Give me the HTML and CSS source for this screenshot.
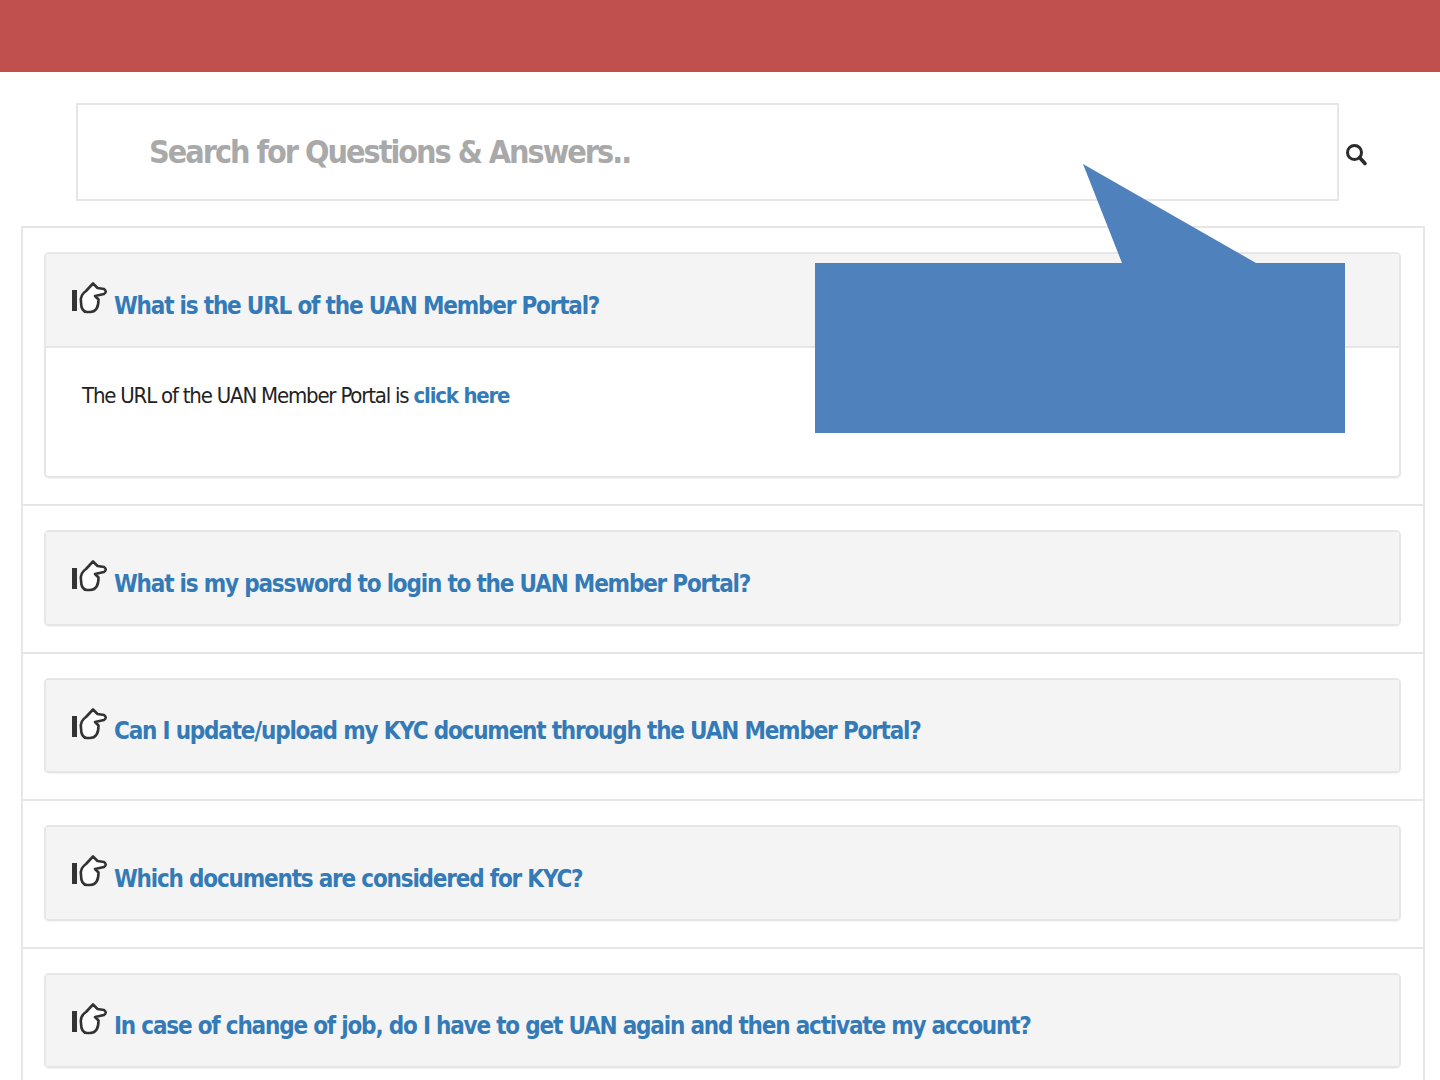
FILE: index.html
```html
<!DOCTYPE html>
<html lang="en">
<head>
    <meta charset="UTF-8">
    <title>UAN Member Portal FAQ</title>
    <link rel="stylesheet" href="styles.css">
</head>
<body>
    <svg width="0" height="0" class="sprite">
        <symbol id="hand" viewBox="0 0 38 34">
            <rect x="2" y="9" width="5" height="21" fill="#333"/>
            <path d="M11 21 C10 15 13 12 16 10 L23 2.5 L27.5 7 L34 8 Q37.5 10.5 34 13 L25 15 L28.5 18.5 C28.5 26 26 31 20 31 L17 31 C13 31 11 27 11 21 Z" fill="#fff" stroke="#333" stroke-width="2.6" stroke-linejoin="round"/>
        </symbol>
    </svg>

    <header class="topbar"></header>

    <div class="search-row">
        <div class="search-box">Search for Questions &amp; Answers..</div>
        <svg class="search-icon" viewBox="0 0 24 24" width="24" height="26">
            <circle cx="10.5" cy="10.5" r="7" fill="none" stroke="#2b2b2b" stroke-width="3"/>
            <path d="M15.5 15.5 L21 21.5" stroke="#2b2b2b" stroke-width="3.6" stroke-linecap="round"/>
        </svg>
    </div>

    <ul class="faq-list">
        <li class="faq-item">
            <div class="panel">
                <div class="panel-head">
                    <svg class="hand"><use href="#hand"/></svg>
                    <a class="question" href="#">What is the URL of the UAN Member Portal?</a>
                </div>
                <div class="panel-body">The URL of the UAN Member Portal is <a href="#">click here</a></div>
            </div>
        </li>
        <li class="faq-item">
            <div class="panel">
                <div class="panel-head">
                    <svg class="hand"><use href="#hand"/></svg>
                    <a class="question" href="#">What is my password to login to the UAN Member Portal?</a>
                </div>
            </div>
        </li>
        <li class="faq-item">
            <div class="panel">
                <div class="panel-head">
                    <svg class="hand"><use href="#hand"/></svg>
                    <a class="question" href="#">Can I update/upload my KYC document through the UAN Member Portal?</a>
                </div>
            </div>
        </li>
        <li class="faq-item">
            <div class="panel">
                <div class="panel-head">
                    <svg class="hand"><use href="#hand"/></svg>
                    <a class="question" href="#">Which documents are considered for KYC?</a>
                </div>
            </div>
        </li>
        <li class="faq-item">
            <div class="panel">
                <div class="panel-head">
                    <svg class="hand"><use href="#hand"/></svg>
                    <a class="question" href="#">In case of change of job, do I have to get UAN again and then activate my account?</a>
                </div>
            </div>
        </li>
    </ul>

    <!-- callout drawn over the page -->
    <svg class="callout" width="530" height="269" viewBox="0 0 530 269">
        <path d="M0 99 H307 L268 0 L441 99 H530 V269 H0 Z" fill="#4f81bd"/>
    </svg>
</body>
</html>
```

FILE: styles.css
```css
* {
    margin: 0;
    padding: 0;
    box-sizing: border-box;
}

html, body {
    height: 1080px;
    overflow: hidden;
}

body {
    background: white;
    font-family: "DejaVu Sans Condensed", "DejaVu Sans", sans-serif;
    position: relative;
}

.sprite {
    position: absolute;
}

.topbar {
    height: 72px;
    background: #c0504d;
}

.search-row {
    display: flex;
    align-items: center;
    padding: 31px 0 0 76px;
    gap: 5px;
}

.search-box {
    width: 1263px;
    height: 98px;
    border: 2px solid #e6e6e6;
    padding-left: 71px;
    padding-bottom: 1px;
    display: flex;
    align-items: center;
    color: #a9a9a9;
    font-size: 32px;
    font-weight: 700;
    letter-spacing: -2px;
}

.search-icon {
    margin-top: 4px;
}

.faq-list {
    list-style: none;
    margin: 25px 15px 0 21px;
    border: 2px solid #e6e6e6;
    border-bottom: none;
}

.faq-item {
    padding: 24px 22px 26px 21px;
    border-bottom: 2px solid #e6e6e6;
}

.panel {
    border: 2px solid #e6e6e6;
    border-radius: 5px;
    box-shadow: 0 1px 1px rgba(0,0,0,0.05);
    background: white;
}

.panel-head {
    height: 91.5px;
    background: #f4f4f4;
    display: flex;
    align-items: flex-start;
    padding: 27px 0 0 24px;
}

.hand {
    width: 38px;
    height: 34px;
    flex: none;
}

.question {
    margin: 9.5px 0 0 6px;
    color: #337ab7;
    font-size: 24px;
    line-height: 30px;
    font-weight: 700;
    letter-spacing: -1.2px;
    text-decoration: none;
    white-space: nowrap;
}

.panel-body {
    border-top: 2px solid #e6e6e6;
    height: 130.5px;
    padding: 33px 0 0 36px;
    color: #222;
    font-size: 22px;
    line-height: 30px;
    letter-spacing: -1.2px;
}

.panel-body a {
    color: #337ab7;
    font-weight: 700;
    text-decoration: none;
}

.callout {
    position: absolute;
    left: 815px;
    top: 164px;
}
```
